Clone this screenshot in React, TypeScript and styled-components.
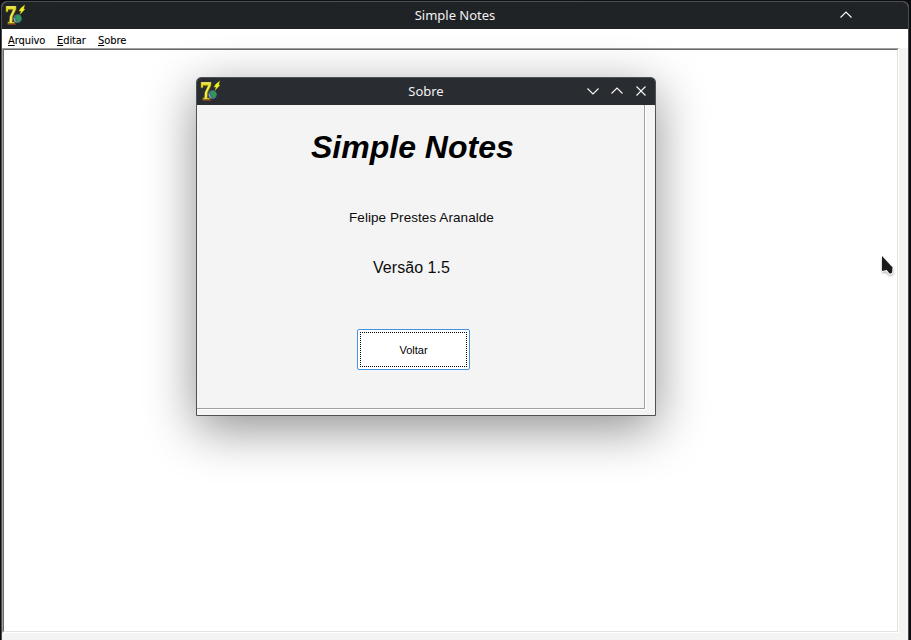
import React from "react";
import styled, { createGlobalStyle } from "styled-components";

const Global = createGlobalStyle`
  * { box-sizing: border-box; }
  html, body { margin: 0; padding: 0; overflow: hidden; background: #0d0e10; }
`;

const Desktop = styled.div`
  position: relative;
  width: 911px;
  height: 640px;
  overflow: hidden;
  padding: 1px 2px 0 1px;
  background: linear-gradient(90deg, #0b0c0f, #111316 50%, #0b0c10);
`;

const MainWindow = styled.div`
  display: flex;
  flex-direction: column;
  height: 639px;
  border: 1px solid #4b4d50;
  border-bottom: 0;
  border-radius: 6px 6px 0 0;
  overflow: hidden;
  background: #f4f4f4;
`;

const TitleBar = styled.div<{ $bg: string }>`
  display: grid;
  grid-template-columns: 76px 1fr 76px;
  align-items: center;
  flex: none;
  height: 27px;
  padding-bottom: 2px;
  background: ${(p) => p.$bg};
`;

const Title = styled.div`
  text-align: center;
  font: 13px/18px "Noto Sans", sans-serif;
  color: #f2f2f2;
`;

const IconSlot = styled.div`
  padding-left: 2px;
  svg { display: block; }
`;

const Controls = styled.div<{ $right: number }>`
  display: flex;
  justify-content: flex-end;
  gap: 12px;
  padding-right: ${(p) => p.$right}px;
  svg { display: block; flex: none; }
`;

const MenuBar = styled.div`
  display: flex;
  flex: none;
  height: 19px;
  gap: 12px;
  padding: 5px 0 0 6px;
  background: #fff;
`;

const MenuItem = styled.span<{ $w: number }>`
  width: ${(p) => p.$w}px;
  white-space: nowrap;
  font: 11px/14px "DejaVu Sans Condensed", "DejaVu Sans", sans-serif;
  font-stretch: condensed;
  letter-spacing: -0.08px;
  -webkit-text-stroke: 0.1px #000;
  color: #000;
  &::first-letter { text-decoration: underline; }
`;

const EditorFrame = styled.div`
  width: 897px;
  height: 585px;
  border: 1px solid #a0a0a0;
  border-right-color: #fff;
  border-bottom-color: #fff;
`;

const Editor = styled.div`
  height: 100%;
  background: #fff;
  border: 1px solid #696969;
  border-right-color: #e3e3e3;
  border-bottom-color: #e3e3e3;
`;

const Dialog = styled.div`
  position: absolute;
  left: 196px;
  top: 77px;
  width: 460px;
  height: 339px;
  display: flex;
  flex-direction: column;
  border: 1px solid #4f5255;
  border-radius: 5px 5px 0 0;
  background: #f4f4f4;
  overflow: hidden;
  box-shadow: 0 13px 50px rgba(0, 0, 0, 0.44);
`;

const Panel = styled.div`
  display: flex;
  flex-direction: column;
  align-items: flex-start;
  width: 448px;
  height: 304px;
  border-right: 1px solid #a0a0a0;
  border-bottom: 1px solid #a0a0a0;
  box-shadow: 1px 1px 0 #fff;
`;

const Heading = styled.h1`
  margin: 23px 0 0 114px;
  font: italic bold 32px/38px "Liberation Sans", sans-serif;
  white-space: nowrap;
  color: #000;
`;

const Label = styled.div<{ $size: number; $top: number; $left: number; $ls: number }>`
  margin: ${(p) => p.$top}px 0 0 ${(p) => p.$left}px;
  font: ${(p) => p.$size}px/20px "Liberation Sans", sans-serif;
  letter-spacing: ${(p) => p.$ls}px;
  white-space: nowrap;
  color: #0c0c0c;
`;

const BackButton = styled.button`
  margin: 51px 0 0 160px;
  width: 113px;
  height: 41px;
  padding: 2px;
  border: 1px solid #4593e3;
  border-radius: 2px;
  outline: none;
  background: #fff;
`;

const Focus = styled.span`
  display: flex;
  width: 107px;
  height: 35px;
  align-items: center;
  justify-content: center;
  border: 1px dotted #000;
  font: 11px/14px "Liberation Sans", sans-serif;
  color: #000;
`;

const Cursor = styled.svg`
  position: absolute;
  left: 879px;
  top: 253px;
  filter: drop-shadow(0 1px 1px rgba(0, 0, 0, 0.35));
`;

const AppIcon = () => (
  <svg width="22" height="22" viewBox="0 0 22 22">
    <path d="M1.6 2h10.9v3.4L9.3 12.5l-.4 5h2.4v2.7H3.4v-2.7h1.5l.4-5L8.6 6.2H4.2v2H1.6z" fill="#6a6818" />
    <path d="M2.1 2.2h9.8v2.9L8.4 12.2 8 18.3h2.3v.9H4.1v-.9h1.5l.4-6.1L9.3 5.3H3.9v2.2H2.1z" fill="#e7dc25" />
    <path d="M2.4 2.8h9.2M6.7 17.8l.3-5.4 3.3-7" fill="none" stroke="#fbf795" strokeWidth=".8" />
    <path d="M4 20.2h8" stroke="#a33b24" strokeWidth=".9" />
    <circle cx="13.5" cy="14.6" r="4.3" fill="#4a6a86" />
    <path d="M12 11.4l2.6-.6 2.3 1.7.4 2.7-2.3 3-1.8-.8.2-1.9-1.9-1.2z" fill="#2a9a55" />
    <path d="M10.1 14.2l.8 2.8 1.4 1" fill="none" stroke="#9ab4c8" strokeWidth="1" />
    <path d="M16.6 4.2l4.2-3.4-1 4.2h1.4l-5.4 5.8 1.2-3.8-2.2.2z" fill="#f4f321" stroke="#8c8c12" strokeWidth=".3" />
  </svg>
);

const Glyph = ({ d }: { d: string }) => (
  <svg width="12" height="12" viewBox="0 0 12 12" fill="none" stroke="#fafafa" strokeWidth="1.1">
    <path d={d} />
  </svg>
);

const DOWN = "M.5 3.5 6 9l5.5-5.5";
const UP = "M.5 8.5 6 3l5.5 5.5";
const CLOSE = "M1.5 1.5l9 9M10.5 1.5l-9 9";

export default function App() {
  return (
    <>
      <Global />
      <Desktop>
        <MainWindow>
          <TitleBar $bg="#202326">
            <IconSlot><AppIcon /></IconSlot>
            <Title>Simple Notes</Title>
            <Controls $right={56}><Glyph d={UP} /></Controls>
          </TitleBar>
          <MenuBar>
            <MenuItem $w={37}>Arquivo</MenuItem>
            <MenuItem $w={29}>Editar</MenuItem>
            <MenuItem $w={29}>Sobre</MenuItem>
          </MenuBar>
          <EditorFrame><Editor /></EditorFrame>
        </MainWindow>
        <Dialog>
          <TitleBar $bg="#292c30">
            <IconSlot><AppIcon /></IconSlot>
            <Title>Sobre</Title>
            <Controls $right={8}>
              <Glyph d={DOWN} />
              <Glyph d={UP} />
              <Glyph d={CLOSE} />
            </Controls>
          </TitleBar>
          <Panel>
            <Heading>Simple Notes</Heading>
            <Label $size={13.5} $top={42} $left={152} $ls={0.07}>Felipe Prestes Aranalde</Label>
            <Label $size={16} $top={30} $left={176} $ls={0.05}>Versão 1.5</Label>
            <BackButton><Focus>Voltar</Focus></BackButton>
          </Panel>
        </Dialog>
        <Cursor width="18" height="26" viewBox="0 0 18 26">
          <path d="M3 3v15.5l4.5-.8 3.2 3.8 3-1.6.3-5z" fill="#1b1b1b" />
          <path d="M3 18.5l4.5-.8 3.2 3.8 3-1.6.3-5" fill="none" stroke="#fff" strokeWidth="1.1" />
        </Cursor>
      </Desktop>
    </>
  );
}
